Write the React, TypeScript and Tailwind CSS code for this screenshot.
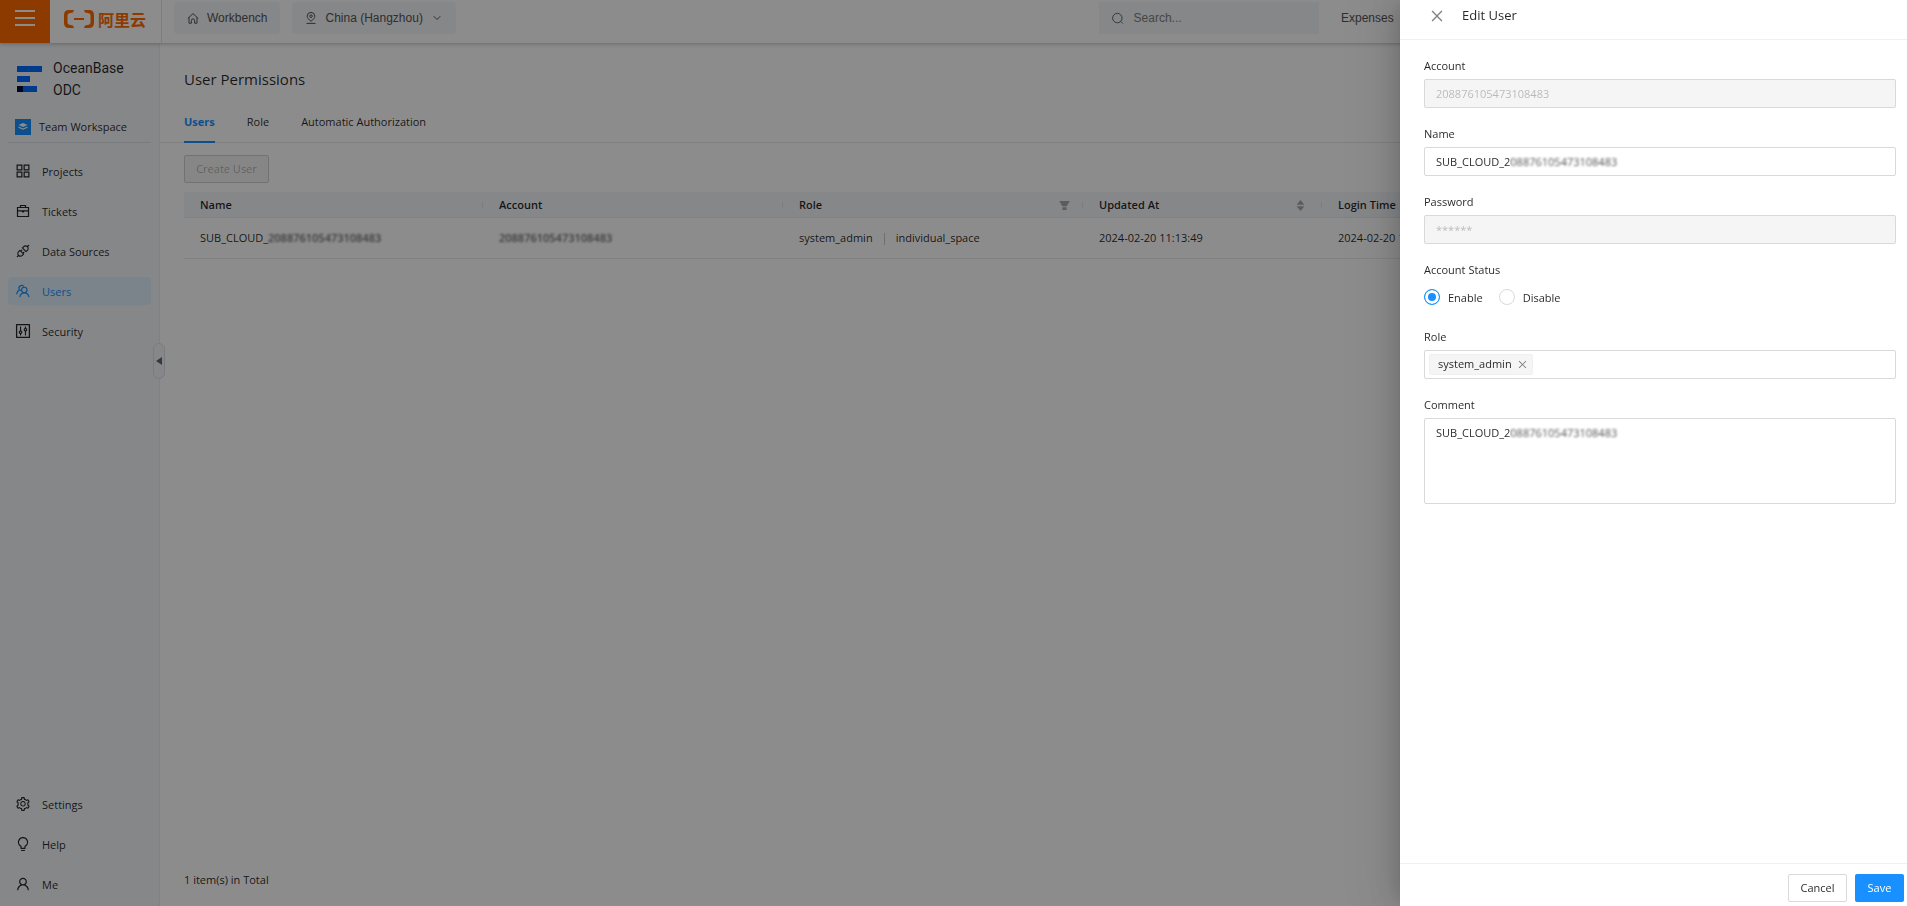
import type { ReactNode } from "react";
import {
  AiFillCaretDown,
  AiFillCaretUp,
  AiFillFilter,
  AiOutlineApi,
  AiOutlineAppstore,
  AiOutlineBulb,
  AiOutlineClose,
  AiOutlineControl,
  AiOutlineSetting,
  AiOutlineUser,
} from "react-icons/ai";
import { ChevronDown } from "lucide-react";

const TicketsIcon = () => (
  <svg width="14" height="14" viewBox="0 0 14 14" fill="none" stroke="currentColor" strokeWidth="1.2">
    <path d="M1.500 3.500h11v9h-11zM4.500 3.500v-2h5v2M1.500 6.800h11" />
    <path d="M5.500 7h3L7 9z" fill="currentColor" stroke="none" />
  </svg>
);

const UsersIcon = () => (
  <svg width="14" height="14" viewBox="0 0 14 14" fill="none" stroke="currentColor" strokeWidth="1.1">
    <circle cx="8.300" cy="6" r="2.700" />
    <path d="M3.800 13.200c.3-2.400 2-4.300 4.500-4.300s4.300 1.900 4.700 4.300" />
    <path d="M8 2.400A2.800 2.800 0 1 0 3.600 6C1.900 6.700.8 8.300.6 10.300M3.600 6c.5.300 1.100.4 1.700.4" />
  </svg>
);

const HomeIcon = () => (
  <svg width="12" height="12" viewBox="0 0 12 12" fill="none" stroke="currentColor">
    <path d="M.8 6.400 6 1.600l5.200 4.800M2 5.400v5.800h2.400V8.500a1.600 1.600 0 0 1 3.200 0v2.700H10V5.400" />
  </svg>
);

const PinIcon = () => (
  <svg width="12" height="12" viewBox="0 0 12 12" fill="none" stroke="currentColor">
    <path d="M6 9.300C3.500 7.400 2.200 6 2.200 4.200a3.800 3.800 0 0 1 7.600 0C9.800 6 8.500 7.400 6 9.300z" />
    <circle cx="6" cy="4.200" r="1.300" />
    <path d="M1.500 11.400h9" />
  </svg>
);

const SearchIcon = () => (
  <svg width="13" height="13" viewBox="0 0 13 13" fill="none" stroke="currentColor">
    <circle cx="6" cy="6" r="5.300" />
    <path d="m9.700 9.700 2.500 2.500" />
  </svg>
);

const AliyunMark = () => (
  <svg width="30" height="18" viewBox="0 0 30 18" fill="#ff6a00">
    <path d="M10 0H5Q0 0 0 5v8q0 5 5 5h5l-1-2.500-3.700-.8Q3.500 14.200 3.500 12.500v-7q0-1.700 1.800-2.200L9 2.500z" />
    <path d="M20 0h5q5 0 5 5v8q0 5-5 5h-5l1-2.500 3.700-.8q1.800-.5 1.800-2.200v-7q0-1.700-1.800-2.200L21 2.500z" />
    <path d="M10 8h10v2H10z" />
  </svg>
);

const OceanBaseMark = () => (
  <svg width="25" height="27" viewBox="0 0 25 27">
    <path d="M0 0h25v6H0zM0 10h13v6H0zM6 20h14v6H6z" fill="#006aff" />
    <path d="M0 20h6v6H0z" fill="#001038" />
  </svg>
);

const mainMenu = [
  { label: "Projects", icon: <AiOutlineAppstore size={18} /> },
  { label: "Tickets", icon: <TicketsIcon /> },
  { label: "Data Sources", icon: <AiOutlineApi size={16} /> },
  { label: "Users", icon: <UsersIcon />, active: true },
  { label: "Security", icon: <AiOutlineControl size={18} /> },
];

const footMenu = [
  { label: "Settings", icon: <AiOutlineSetting size={16} /> },
  { label: "Help", icon: <AiOutlineBulb size={16} /> },
  { label: "Me", icon: <AiOutlineUser size={16} /> },
];

function MenuItem({ label, icon, active }: { label: string; icon: ReactNode; active?: boolean }) {
  return (
    <li>
      <a
        href="#"
        className={
          active
            ? "flex h-7 items-center gap-3 rounded-sm bg-[#dff0fb] pl-2 font-medium text-[#1890ff]"
            : "flex h-7 items-center gap-3 rounded-sm pl-2"
        }
      >
        <span className="flex w-[14px] shrink-0 justify-center">
          <span className="shrink-0">{icon}</span>
        </span>
        <span className="pt-0.5">{label}</span>
      </a>
    </li>
  );
}

function Masked({ text }: { text: string }) {
  return <span className="font-semibold text-black/60 blur-[1px]">{text}</span>;
}

function Field({ label, id, children }: { label: string; id: string; children: ReactNode }) {
  return (
    <div className="mb-4">
      <label htmlFor={id} className="mb-[3px] block leading-5">
        {label}
      </label>
      {children}
    </div>
  );
}

function TopBar() {
  return (
    <header className="relative z-10 flex h-[43px] shrink-0 bg-white font-['Liberation_Sans',Arial,sans-serif] text-xs text-[#555] shadow-[0_1px_4px_rgba(0,0,0,0.25)]">
      <button type="button" aria-label="Menu" className="flex w-[50px] flex-col items-center gap-[5px] bg-[#ff6a00] pt-[10px]">
        <span className="h-[2px] w-5 bg-white" />
        <span className="h-[2px] w-5 bg-white" />
        <span className="h-[2px] w-5 bg-white" />
      </button>
      <a href="#" className="flex h-full w-28 items-start gap-1 border-r border-[#e3e4e6] pt-[10px] pl-[14px]">
        <AliyunMark />
        <span className="font-['Noto_Sans_CJK_SC',sans-serif] text-base leading-[18px] font-bold whitespace-nowrap text-[#ff6a00]">阿里云</span>
      </a>
      <div className="flex flex-1 items-start pt-[2px] pl-3">
        <button type="button" className="flex h-8 items-center gap-2 rounded-sm bg-[#f4f6f8] px-[13px]">
          <HomeIcon />
          Workbench
        </button>
        <button type="button" className="ml-3 flex h-8 items-center gap-2 rounded-sm bg-[#f4f6f8] px-[13px]">
          <PinIcon />
          China (Hangzhou)
          <ChevronDown size={12} />
        </button>
        <label className="ml-auto flex h-8 w-[220px] items-center gap-[10px] bg-[#f4f6f8] px-[13px]">
          <SearchIcon />
          <input type="text" aria-label="Search" placeholder="Search..." className="w-full bg-transparent outline-none placeholder:text-[#808080]" />
        </label>
        <nav className="flex h-8 w-[588px] items-center pl-[22px]">
          <a href="#">Expenses</a>
        </nav>
      </div>
    </header>
  );
}

function Sidebar() {
  return (
    <aside className="relative flex w-40 shrink-0 flex-col border-r border-[#e9ecf0] bg-[#f3f6fa] px-2 pb-2">
      <div className="flex items-start gap-[11px] pt-[14px] pl-[9px]">
        <div className="pt-[9px]">
          <OceanBaseMark />
        </div>
        <div className="font-['Roboto',sans-serif] text-sm leading-[22px]">
          OceanBase
          <br />
          ODC
        </div>
      </div>
      <a href="#" className="mt-[11px] flex h-[31px] items-center gap-2 border-b border-[#dde1e7] pl-[7px]">
        <span className="flex size-4 items-center justify-center bg-[#1890ff]">
          <svg width="10" height="10" viewBox="0 0 10 10" fill="#fff">
            <path d="m5 1 4.500 2L5 5 .5 3zM.5 4.500 5 6.500l4.500-2v1.200L5 7.700.5 5.700z" />
          </svg>
        </span>
        Team Workspace
      </a>
      <ul className="mt-[14px] flex flex-col gap-3">
        {mainMenu.map((m) => (
          <MenuItem key={m.label} {...m} />
        ))}
      </ul>
      <ul className="mt-auto flex flex-col gap-3">
        {footMenu.map((m) => (
          <MenuItem key={m.label} {...m} />
        ))}
      </ul>
      <button
        type="button"
        aria-label="Collapse"
        className="absolute top-[300px] -right-[6px] flex h-9 w-3 items-center justify-center rounded-full border border-[#dde1e7] bg-[#f3f6fa]"
      >
        <svg width="6" height="8" viewBox="0 0 6 8">
          <path d="M6 0v8L0 4z" fill="#666" />
        </svg>
      </button>
    </aside>
  );
}

function Content() {
  const th = "relative border-b border-[#e8ecf1] pt-0.5 pr-3 pl-4 text-left font-semibold";
  const td = "pt-0.5 pl-4";
  const rule = "absolute top-2.5 right-0 h-1.5 w-px bg-[#dfe3e8]";
  return (
    <main className="flex min-w-0 flex-1 flex-col bg-white">
      <h1 className="px-6 pt-6 text-[15px] leading-6 font-medium">User Permissions</h1>
      <nav className="mt-[9px] flex h-[43px] gap-8 border-b border-[#e8e8e8] px-6 leading-[44px]">
        <a href="#" className="h-[43px] border-b-2 border-[#1890ff] font-bold text-[#1890ff]">Users</a>
        <a href="#">Role</a>
        <a href="#">Automatic Authorization</a>
      </nav>
      <div className="flex flex-1 flex-col px-6 pt-3 pb-4">
        <button type="button" disabled className="h-7 w-[85px] rounded-xs border border-[#d0d0d0] bg-[#f5f5f5] text-black/30">
          Create User
        </button>
        <table className="mt-[9px] w-full table-fixed border-collapse">
          <colgroup>
            <col className="w-[299px]" />
            <col className="w-[300px]" />
            <col className="w-[300px]" />
            <col className="w-[239px]" />
            <col />
          </colgroup>
          <thead className="bg-[#f3f6fa]">
            <tr className="h-[25px]">
              <th className={th}>Name<span className={rule} /></th>
              <th className={th}>Account<span className={rule} /></th>
              <th className={th}>
                <div className="flex items-center justify-between">
                  Role
                  <AiFillFilter size={13} className="text-[#a8a8a8]" />
                </div>
                <span className={rule} />
              </th>
              <th className={th}>
                <div className="flex items-center justify-between pr-1">
                  Updated At
                  <span className="flex flex-col text-[#a8a8a8]">
                    <AiFillCaretUp size={11} className="-mb-[5px]" />
                    <AiFillCaretDown size={11} />
                  </span>
                </div>
                <span className={rule} />
              </th>
              <th className={th}>Login Time</th>
            </tr>
          </thead>
          <tbody>
            <tr className="h-[41px] border-b border-[#e8ecf1]">
              <td className={td}>SUB_CLOUD_<Masked text="208876105473108483" /></td>
              <td className={td}><Masked text="208876105473108483" /></td>
              <td className={td}>
                <div className="flex items-center">
                  system_admin
                  <span className="mx-[11px] h-3 w-px bg-[#ccc]" />
                  individual_space
                </div>
              </td>
              <td className={td}>2024-02-20 11:13:49</td>
              <td className={td}>2024-02-20 11:13:49</td>
            </tr>
          </tbody>
        </table>
        <p className="mt-auto leading-5">1 item(s) in Total</p>
      </div>
    </main>
  );
}

function EditUserDrawer() {
  const box = "block w-full rounded-xs border border-[#d9d9d9] px-[11px]";
  const cover = "pointer-events-none absolute left-[86px] h-[15px] w-28 bg-white/20 backdrop-blur-[1px]";
  return (
    <section
      role="dialog"
      aria-label="Edit User"
      className="fixed inset-y-0 right-0 z-30 flex w-[507px] flex-col bg-white shadow-[-6px_0_16px_-8px_rgba(0,0,0,0.16),-9px_0_28px_rgba(0,0,0,0.1),-12px_0_48px_16px_rgba(0,0,0,0.06)]"
    >
      <header className="flex h-10 items-center gap-[17px] border-b border-[#f0f0f0] pb-[7px] pl-[29px]">
        <button type="button" aria-label="Close" className="text-black/50">
          <AiOutlineClose size={16} />
        </button>
        <h2 className="text-[13px] font-medium">Edit User</h2>
      </header>
      <form className="flex-1 pt-4 pr-[11px] pl-6">
        <Field label="Account" id="account">
          <input id="account" disabled defaultValue="208876105473108483" className={`${box} h-[29px] bg-[#f5f5f5] text-black/25`} />
        </Field>
        <Field label="Name" id="name">
          <div className="relative flex items-center">
            <input id="name" defaultValue="SUB_CLOUD_208876105473108483" className={`${box} h-[29px]`} />
            <span className={cover} />
          </div>
        </Field>
        <Field label="Password" id="password">
          <input id="password" disabled defaultValue="******" className={`${box} h-[29px] bg-[#f5f5f5] text-black/25`} />
        </Field>
        <fieldset className="mb-4">
          <legend className="mb-[3px] leading-5">Account Status</legend>
          <div className="flex h-7 items-center gap-4">
            {["Enable", "Disable"].map((s) => (
              <label key={s} className="flex items-center gap-2">
                <input
                  type="radio"
                  name="status"
                  defaultChecked={s === "Enable"}
                  className="size-4 appearance-none rounded-full border border-[#d9d9d9] checked:border-[#1890ff] checked:bg-[#1890ff] checked:shadow-[inset_0_0_0_3px_#fff]"
                />
                <span className="pt-0.5">{s}</span>
              </label>
            ))}
          </div>
        </fieldset>
        <Field label="Role" id="role">
          <div className="flex h-[29px] items-center rounded-xs border border-[#d9d9d9] px-1">
            <span className="flex h-[21px] shrink-0 items-center gap-[5px] rounded-xs border border-[#f0f0f0] bg-[#f5f5f5] pr-1 pl-2">
              system_admin
              <button type="button" aria-label="Remove system_admin" className="text-black/50">
                <AiOutlineClose size={11} />
              </button>
            </span>
            <input id="role" className="min-w-0 flex-1 outline-none" />
          </div>
        </Field>
        <Field label="Comment" id="comment">
          <div className="relative">
            <textarea
              id="comment"
              defaultValue="SUB_CLOUD_208876105473108483"
              className={`${box} h-[86px] resize-none pt-1 leading-5`}
            />
            <span className={`${cover} top-2`} />
          </div>
        </Field>
      </form>
      <footer className="flex justify-end gap-2 border-t border-[#f0f0f0] pt-[10px] pr-[3px] pb-1">
        <button type="button" className="h-7 w-[59px] rounded-xs border border-[#d9d9d9]">
          Cancel
        </button>
        <button type="button" className="h-7 w-[49px] rounded-xs bg-[#1890ff] font-medium text-white">
          Save
        </button>
      </footer>
    </section>
  );
}

export default function App() {
  return (
    <div className="flex h-screen flex-col overflow-hidden font-['Open_Sans','Noto_Sans_CJK_SC',sans-serif] text-[11px] text-black/85">
      <TopBar />
      <div className="flex min-h-0 flex-1">
        <Sidebar />
        <Content />
      </div>
      <div className="fixed inset-0 z-20 bg-black/45" />
      <EditUserDrawer />
    </div>
  );
}
